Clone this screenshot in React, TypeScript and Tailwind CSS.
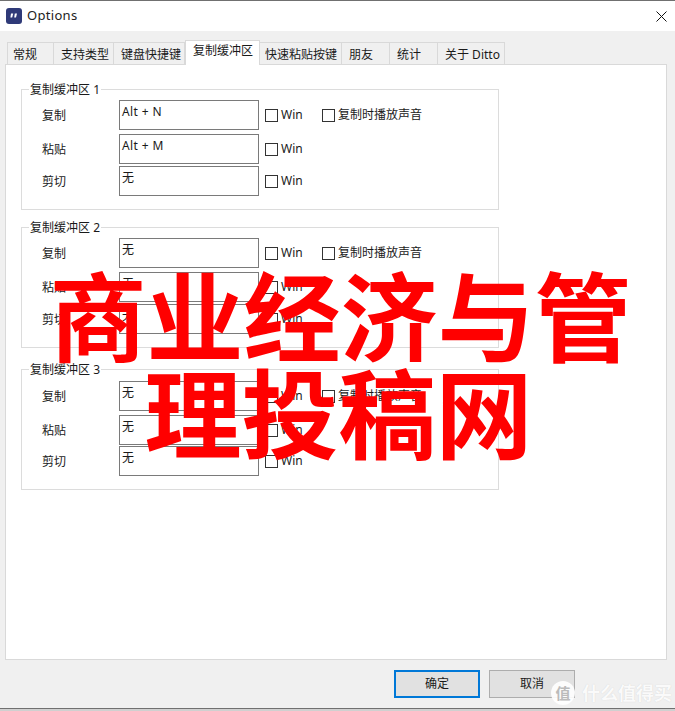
const tabs = [
  { label: "常规", w: "w-[47px]", pad: "pl-[5px]" },
  { label: "支持类型", w: "w-[60px]", pad: "pl-[7px]" },
  { label: "键盘快捷键", w: "w-[71px]", pad: "pl-[7px]" },
  { label: "复制缓冲区", w: "w-[75px]", active: true, pad: "pl-[7px]" },
  { label: "快速粘贴按键", w: "w-[82px]", pad: "pl-[5px]" },
  { label: "朋友", w: "w-[48px]", pad: "pl-[7px]" },
  { label: "统计", w: "w-[48px]", pad: "pl-[7px]" },
  { label: "关于 Ditto", w: "w-[67px]", pad: "pl-[7px]" },
];

function Check({ label }: { label: string }) {
  return (
    <div className="flex items-center">
      <span className="block w-[13px] h-[13px] border border-[#333] bg-white" />
      <span className="ml-[3px] leading-[16px]">{label}</span>
    </div>
  );
}

function Row({ name, value, sound, gap }: { name: string; value: string; sound?: boolean; gap: string }) {
  return (
    <div className={`flex items-center h-[30px] ${gap}`}>
      <span className="w-[97px] pl-[20px] pt-px">{name}</span>
      <div className="w-[140px] h-[30px] border border-[#7a7a7a] bg-white pl-[2px] leading-[22px] tracking-[0.4px]">
        {value}
      </div>
      <div className="ml-[6px] w-[57px]">
        <Check label="Win" />
      </div>
      {sound && <Check label="复制时播放声音" />}
    </div>
  );
}

function Group({ n, keys, margin, pad = "pt-[10px]", lastGap = "mt-[2px]" }: { n: number; keys: string[]; margin: string; pad?: string; lastGap?: string }) {
  return (
    <div className={`relative w-[478px] h-[121px] border border-[#dcdcdc] ${pad} ${margin}`}>
      <span className="absolute left-[7px] top-[-8px] bg-white px-[1px] leading-[16px]">复制缓冲区 {n}</span>
      <Row name="复制" value={keys[0]} sound gap="" />
      <Row name="粘贴" value={keys[1]} gap="mt-[4px]" />
      <Row name="剪切" value={keys[2]} gap={lastGap} />
    </div>
  );
}

export default function App() {
  return (
    <div className="relative w-[675px] h-[711px] overflow-hidden bg-[#f0f0f0] text-[12px] text-[#1a1a1a] font-['Noto_Sans','Noto_Sans_CJK_SC',sans-serif]">
      {/* title bar */}
      <div className="h-[31px] bg-white border-t border-[#707070] flex items-center pl-[6px] pr-[8px]">
        <svg width="16" height="16" viewBox="0 0 16 16">
          <rect width="16" height="16" rx="3" fill="#2f3a78" />
          <path d="M5 5.5h2.2L6.2 9.5H4.4zM8.8 5.5H11L10 9.5H8.2z" fill="#fff" />
        </svg>
        <span className="ml-[5px] text-[13px] text-[#222] tracking-[0.3px]">Options</span>
        <svg className="ml-auto" width="11" height="11" viewBox="0 0 11 11">
          <path d="M0.5 0.5L10.5 10.5M10.5 0.5L0.5 10.5" stroke="#111" strokeWidth="1" fill="none" />
        </svg>
      </div>

      {/* tabs */}
      <div className="flex items-end h-[33px] pl-[7px] relative z-10">
        {tabs.map((t) =>
          t.active ? (
            <div
              key={t.label}
              className={`${t.w} ${t.pad} h-[25px] mb-[-1px] bg-white border border-b-0 border-[#d9d9d9] flex items-start pt-[2px] leading-[16px]`}
            >
              {t.label}
            </div>
          ) : (
            <div
              key={t.label}
              className={`${t.w} ${t.pad} h-[22px] bg-[#f0f0f0] border border-b-0 border-l-0 first:border-l border-[#d9d9d9] flex items-center pt-[2px] leading-[16px]`}
            >
              {t.label}
            </div>
          ),
        )}
      </div>

      {/* panel */}
      <div className="ml-[5px] w-[662px] h-[596px] bg-white border border-[#d9d9d9] pl-[15px] pt-[24px]">
        <Group n={1} keys={["Alt + N", "Alt + M", "无"]} margin="" />
        <Group n={2} keys={["无", "无", "无"]} margin="mt-[17px]" />
        <Group n={3} keys={["无", "无", "无"]} margin="mt-[21px]" pad="pt-[11px]" lastGap="mt-[1px]" />
      </div>

      {/* buttons */}
      <div className="flex mt-[10px] pl-[394px] gap-[9px]">
        <button className="w-[86px] h-[28px] bg-[#e1e1e1] border-2 border-[#0078d7]">确定</button>
        <button className="w-[86px] h-[28px] bg-[#e1e1e1] border border-[#adadad]">取消</button>
      </div>

      {/* window bottom edge */}
      <div className="absolute left-0 right-0 top-[708px] h-[3px] bg-[#d0d0d0] border-t border-[#707070]" />

      {/* overlay headline */}
      <div className="absolute left-0 top-[263px] w-[681px] text-center text-[97px] leading-[97px] font-bold text-[#ff0000] font-['Noto_Sans_CJK_SC',sans-serif]">
        <div>商业经济与管</div>
        <div className="pr-[4px]">理投稿网</div>
      </div>

      {/* watermark */}
      <div className="absolute left-[551px] top-[681px] w-[24px] h-[24px] rounded-full bg-white/90 flex items-center justify-center text-[15px] text-[#bbb] font-bold">
        值
      </div>
      <div className="absolute left-[582px] top-[680px] text-[18px] leading-[26px] text-white/90 font-bold [text-shadow:0_0_1px_#ccc]">
        什么值得买
      </div>
    </div>
  );
}
